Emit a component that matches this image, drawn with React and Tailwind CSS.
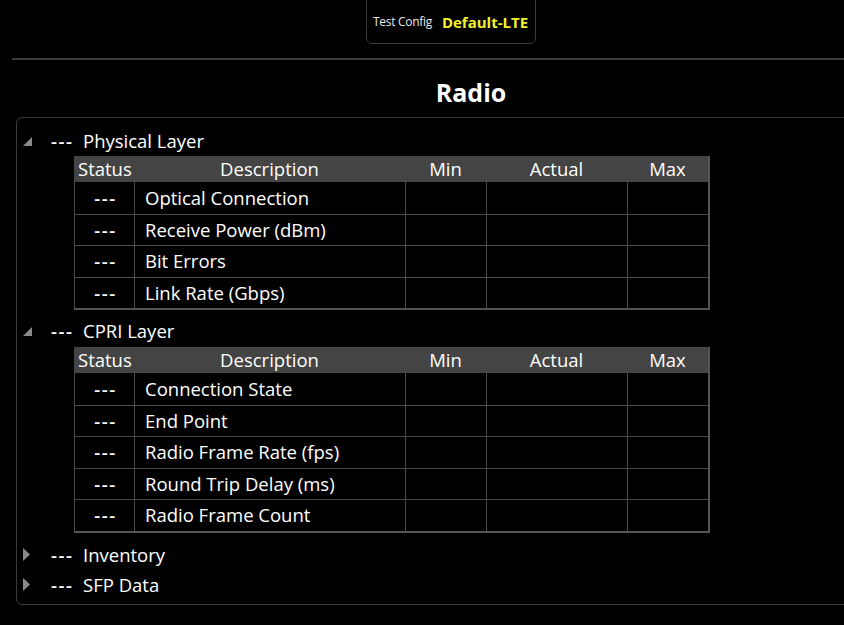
import React from 'react';

const cols = 'grid grid-cols-[60px_271px_81px_141px_81px]';

const physical = ['Optical Connection', 'Receive Power (dBm)', 'Bit Errors', 'Link Rate (Gbps)'];
const cpri = ['Connection State', 'End Point', 'Radio Frame Rate (fps)', 'Round Trip Delay (ms)', 'Radio Frame Count'];

const Expanded = () => (
  <svg width="9" height="9" viewBox="0 0 9 9" className="block">
    <polygon points="9,0 9,9 0,9" fill="#8a8a8a" />
  </svg>
);

const Collapsed = () => (
  <svg width="8" height="13" viewBox="0 0 8 13" className="block">
    <polygon points="0,0 7,6.5 0,13" fill="#8a8a8a" />
  </svg>
);

const Dashes = () => <span className="font-semibold tracking-[1.5px]">---</span>;

const TreeRow = ({ open, label, className = '' }) => (
  <div className={`flex items-center h-[28px] ${className}`}>
    <div className="w-[34px] flex pl-[6px]">{open ? <Expanded /> : <Collapsed />}</div>
    <span className="w-[32px]"><Dashes /></span>
    <span>{label}</span>
  </div>
);

const StatusTable = ({ rows, className = '' }) => (
  <div className={`ml-[57px] w-[636px] border-r-2 border-b-2 border-[#545454] ${className}`}>
    <div className={`${cols} h-[26px] items-center bg-[#444444] leading-none`}>
      <span className="pl-[4px]">Status</span>
      <span className="text-center">Description</span>
      <span className="text-center">Min</span>
      <span className="text-center">Actual</span>
      <span className="text-center">Max</span>
    </div>
    {rows.map((r, i) => (
      <div key={r} className={`${cols} h-[31.5px] ${i > 0 ? 'border-t border-[#4a4a4a]' : ''}`}>
        <div className="border-l border-[#4a4a4a] flex items-center justify-center pl-[2px]"><Dashes /></div>
        <div className="border-l border-[#4a4a4a] flex items-center pl-[10px]">{r}</div>
        <div className="border-l border-[#4a4a4a]" />
        <div className="border-l border-[#4a4a4a]" />
        <div className="border-l border-[#4a4a4a]" />
      </div>
    ))}
  </div>
);

export default function App() {
  return (
    <div className="w-[844px] h-[625px] overflow-hidden bg-black text-white font-['Open_Sans',sans-serif] text-[18.5px]">
      <div className="ml-[366px] -mt-[6px] w-[170px] h-[50px] border border-[#3a3a3a] rounded-md flex items-center pt-[6px] pl-[6px] gap-[10px]">
        <span className="text-[12px] text-[#e8e8e8] tracking-[-0.3px]">Test Config</span>
        <span className="text-[15px] font-bold text-[#f2f22c]">Default-LTE</span>
      </div>
      <div className="ml-[12px] mt-[14px] h-[2px] bg-[#3c3c3c]" />
      <div className="ml-[12px] mt-[17px] h-[30px] flex items-center justify-center w-[918px]">
        <span className="text-[25px] font-bold leading-none">Radio</span>
      </div>
      <div className="ml-[16px] mt-[10px] w-[900px] h-[488px] border border-[#3a3a3a] rounded-md pt-[9px]">
        <TreeRow open label="Physical Layer" />
        <StatusTable rows={physical} className="mt-[1px]" />
        <TreeRow open label="CPRI Layer" className="mt-[7px]" />
        <StatusTable rows={cpri} className="mt-[2px]" />
        <TreeRow label="Inventory" className="mt-[8px]" />
        <TreeRow label="SFP Data" className="mt-[2px]" />
      </div>
    </div>
  );
}
